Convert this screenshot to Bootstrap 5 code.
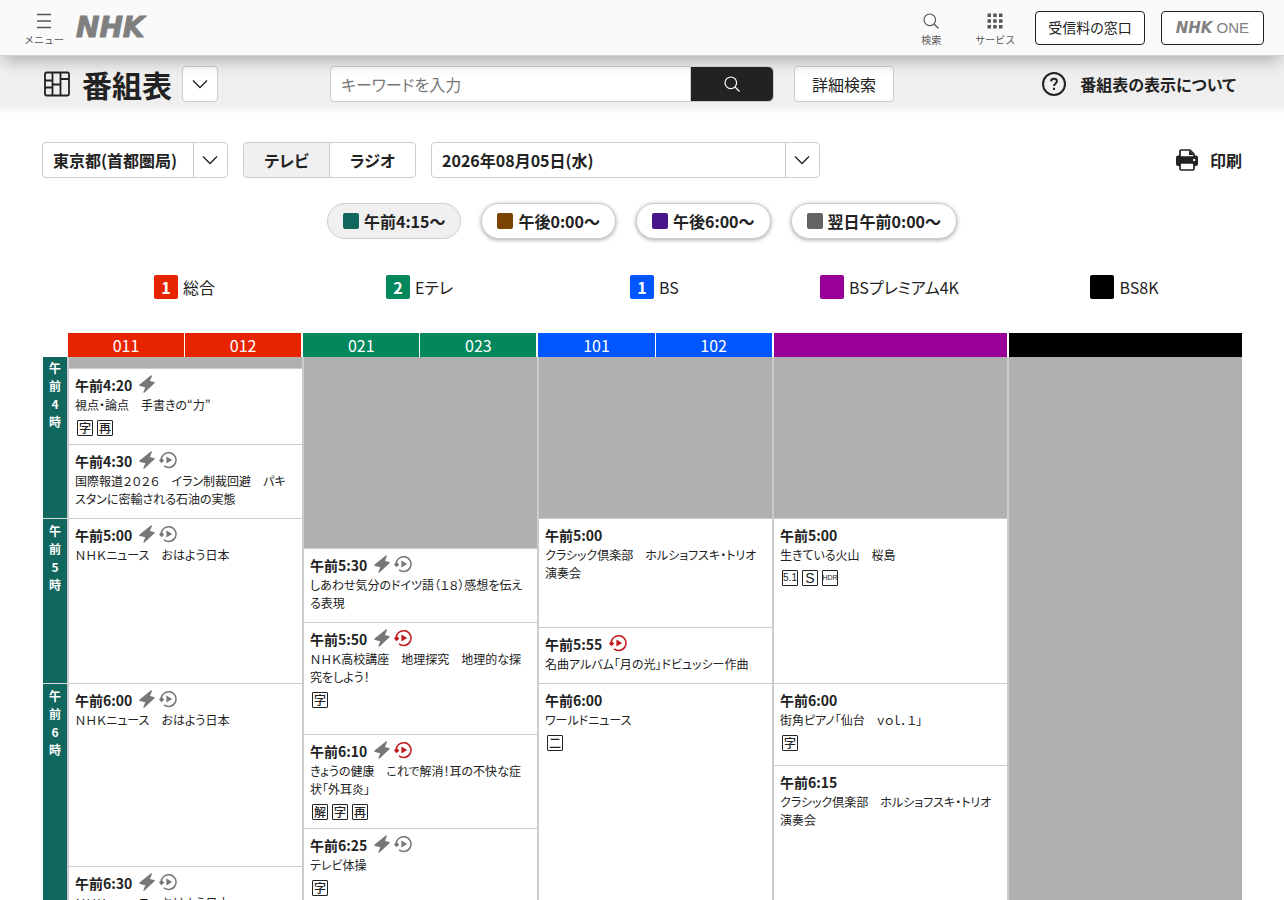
<!DOCTYPE html>
<html lang="ja">
<head>
<meta charset="utf-8">
<meta name="viewport" content="width=device-width, initial-scale=1">
<title>番組表 - NHK</title>
<link rel="stylesheet" href="https://cdn.jsdelivr.net/npm/bootstrap@5.3.0/dist/css/bootstrap.min.css">
<style>
  body { font-family: "Noto Sans CJK JP", sans-serif; font-feature-settings: "palt"; font-size: 16px; color: #222; height: 100vh; }
  input, select, button { font-feature-settings: "palt"; }
  a { color: inherit; text-decoration: none; }
  .site-head { height: 56px; background: #fafafa; border-bottom: 1px solid #d2d2d2; box-shadow: 0 10px 14px -4px rgba(0,0,0,.24); padding: 0 20px; z-index: 2; color: #555; }
  .nav-item-sm { border: 0; background: none; color: inherit; padding: 4px 0 0; font-size: 10px; line-height: 14px; width: 48px; gap: 4px; font-feature-settings: normal; }
  .logo { font-family: "DejaVu Sans", sans-serif; font-weight: 700; font-style: oblique; color: #808080; font-size: 28px; line-height: 32px; -webkit-text-stroke: 1px #808080; }
  .logo-s { font-size: 15px; line-height: 20px; -webkit-text-stroke: 0; }
  .one { font-family: "Liberation Sans", sans-serif; font-size: 15px; line-height: 20px; color: #808080; }
  .head-btn { height: 34px; background: #fff; border: 1px solid #222; border-radius: 4px; color: #222; font-size: 14px; padding: 0 12px; }
  .head-one { padding: 0 14px; }
  .title-bar { height: 58px; background: linear-gradient(#efefef 50px, #fff); padding: 0 42px 2px; }
  .title-left { width: 288px; gap: 10px; }
  h1 { font-size: 30px; line-height: 36px; font-weight: 700; }
  .box { height: 36px; border: 1px solid #ccc; border-radius: 4px; background-color: #fff; color: #222; font-size: 16px; line-height: 24px; padding: 0 10px; }
  .box::placeholder { color: #777; }
  .sq { width: 36px; padding: 0; }
  .search { width: 444px; }
  .search-btn { width: 84px; background: #222; border: 1px solid #ccc; color: #fff; padding: 0; }
  .search-btn:hover { background: #444; color: #fff; }
  .detail { width: 100px; margin-left: 20px; }
  .fw-b { font-weight: 700; }
  .help { gap: 14px; margin-right: 6px; }
  .filters { padding: 0 42px; margin-top: 28px; gap: 15px; }
  .pick { font-weight: 700; background-image: url("data:image/svg+xml,%3Csvg xmlns='http://www.w3.org/2000/svg' viewBox='0 0 16 16' fill='none' stroke='%23222' stroke-width='1.3'%3E%3Cpath d='M1 4.5l7 7 7-7'/%3E%3C/svg%3E"), linear-gradient(#ccc, #ccc); background-size: 16px 16px, 1px 36px; background-repeat: no-repeat; background-position: right 9px center, right 33px center; padding-right: 36px; }
  .pick-area { width: 186px; }
  .pick-date { width: 389px; }
  .media { width: 173px; }
  .media .btn { border: 1px solid #ccc; height: 36px; line-height: 34px; padding: 0; font-weight: 700; color: #222; border-radius: 4px; }
  .media .btn-check:checked + .btn { background: #f0f0f0; border-color: #ccc; color: #222; }
  .pills { margin-top: 25px; gap: 20px; }
  .pill { height: 36px; border: 1px solid #ccc; border-radius: 18px; background: #fff; color: #222; font-weight: 700; font-size: 16px; padding: 0 15px; gap: 5px; box-shadow: 0 1px 4px rgba(0,0,0,.35); }
  .pill.on { background: #f0f0f0; box-shadow: none; }
  .chip { width: 16px; height: 16px; border-radius: 2px; }
  .legend-row { margin: 36px 42px 0; padding-left: 25px; }
  .legend-row > a { flex: 1 1 0; gap: 5px; line-height: 24px; }
  .swatch { width: 24px; height: 24px; border-radius: 2px; color: #fff; font-weight: 700; line-height: 24px; text-align: center; }
  .ch-row { margin: 34px 42px 0; padding-left: 25px; }
  .ch { flex: 1 1 0; margin: 0 1px; height: 24px; color: #fff; line-height: 24px; text-align: center; }
  .ch span { flex: 1 1 0; }
  .ch span + span { border-left: 1px solid #fff; }
  .c-g { background: #e82400; } .c-e { background: #03875c; } .c-bs { background: #0057ff; } .c-4k { background: #990099; } .c-8k { background: #000; }
  .t-am { background: #11675e; } .t-pm { background: #7a4300; } .t-ev { background: #481489; } .t-nx { background: #646464; }
  .guide { margin: 0 42px; min-height: 0; }
  .hours { width: 25px; padding-left: 1px; }
  .hour { color: #fff; font-size: 12px; font-weight: 700; line-height: 18px; text-align: center; padding: 2px 6px; flex: none; }
  .hour + .hour { border-top: 1px solid #ddd; padding-top: 3px; }
  .lane { flex: 1 1 0; min-width: 0; border-left: 2px solid #ccc; }
  .prog { flex: none; overflow: hidden; border-top: 1px solid #ccc; padding: 6px 14px 0 6px; font-size: 12px; line-height: 18px; }
  .off { flex: none; background: #b0b0b0; }
  .rest { flex: 1 0 auto; }
  .when { font-size: 14px; font-weight: 700; height: 20px; margin-bottom: 1px; gap: 4px; line-height: 20px; }
  .when time { margin-right: 3px; }
  .ico { flex: none; display: block; }
  .marks { gap: 4px; padding: 6px 0 0 2px; }
  .mk { width: 16px; height: 16px; border: 1px solid #222; border-radius: 1px; font-size: 12px; font-weight: 500; line-height: 14px; display: flex; justify-content: center; }
  .mk-l { font-family: "Liberation Sans", sans-serif; font-size: 14px; }
  .mk-n { font-family: "Liberation Sans Narrow", "Liberation Sans", sans-serif; font-size: 10px; }
  .mk-t { font-size: 7px; }
  .gray { color: #777; } .red { color: #c1191b; }
</style>
<script src="https://cdn.jsdelivr.net/npm/bootstrap@5.3.0/dist/js/bootstrap.bundle.min.js"></script>
</head>
<body class="d-flex flex-column overflow-hidden">
<svg width="0" height="0" class="position-absolute" aria-hidden="true">
  <symbol id="bolt" viewBox="0 0 16 18"><path fill="currentColor" d="M11.800.4 .6 9.500Q-.3 10.600 1 11l5.300 1.300-1.900 4.600q-.1 1.400 1.100.5L15.500 8.300Q16.400 7.200 15 6.900L10.900 6l2-4.800Q13.100-.4 11.800.4z"/></symbol>
  <symbol id="replay" viewBox="0 0 18 18"><path d="M2.200 9.500A7.400 7.400 0 1 1 5 14.900" fill="none" stroke="currentColor" stroke-width="1.500"/><path fill="currentColor" d="M0 9.600 2.300 7l3 2.600-2.700 2.600zM7.400 5.500v7L13.200 9z"/></symbol>
  <symbol id="down" viewBox="0 0 16 16"><path d="M1 4.500l7 7 7-7" fill="none" stroke="currentColor" stroke-width="1.300"/></symbol>
  <symbol id="lens" viewBox="0 0 16 16"><circle cx="6.800" cy="6.800" r="5.800" fill="none" stroke="currentColor" stroke-width="1.200"/><path d="M11 11l4.500 4.500" stroke="currentColor" stroke-width="1.200"/></symbol>
</svg>

<header class="site-head d-flex align-items-center position-relative flex-shrink-0">
  <button type="button" class="nav-item-sm d-flex flex-column align-items-center">
    <svg class="ico" width="16" height="16" viewBox="0 0 16 16"><path d="M1 1.500h14M1 8h14M1 14.500h14" stroke="currentColor" stroke-width="1.300"/></svg>メニュー
  </button>
  <a href="#" class="logo ms-2">NHK</a>
  <div class="d-flex align-items-center ms-auto">
    <button type="button" class="nav-item-sm d-flex flex-column align-items-center">
      <svg class="ico" width="16" height="16"><use href="#lens"/></svg>検索
    </button>
    <button type="button" class="nav-item-sm d-flex flex-column align-items-center ms-3">
      <svg class="ico" width="16" height="16" viewBox="0 0 16 16" fill="currentColor"><path d="M.5.5H4V4H.5zM6.200.5h3.500V4H6.200zM12 .5h3.500V4H12zM.5 6.200H4v3.500H.5zM6.200 6.200h3.500v3.500H6.200zM12 6.200h3.500v3.500H12zM.5 12H4v3.500H.5zM6.200 12h3.500v3.500H6.200zM12 12h3.500v3.500H12z"/></svg>サービス
    </button>
    <a href="#" class="head-btn d-flex align-items-center ms-3">受信料の窓口</a>
    <a href="#" class="head-btn head-one d-flex align-items-center justify-content-center ms-3 gap-1"><span class="logo logo-s">NHK</span><span class="one">ONE</span></a>
  </div>
</header>

<div class="title-bar d-flex align-items-center flex-shrink-0">
  <div class="title-left d-flex align-items-center">
    <svg class="ico" width="30" height="26" viewBox="0 0 30 26" fill="none" stroke="#222" stroke-width="1.800"><rect x="3" y="1.500" width="24" height="23" rx="1.500"/><path d="M10.500 1.500v23M18.500 1.500v23M3 9.500h7.500M3 16.500h7.500M10.500 13.500h8M18.500 8H27"/></svg>
    <h1 class="mb-0">番組表</h1>
    <button type="button" class="box sq d-flex align-items-center justify-content-center" aria-label="メニューを開く"><svg width="16" height="16"><use href="#down"/></svg></button>
  </div>
  <form class="search input-group flex-nowrap">
    <input type="search" class="form-control box" placeholder="キーワードを入力" aria-label="キーワード">
    <button type="button" class="btn search-btn" aria-label="検索"><svg class="ico mx-auto" width="16" height="16"><use href="#lens"/></svg></button>
  </form>
  <a href="#" class="box detail d-flex align-items-center justify-content-center">詳細検索</a>
  <a href="#" class="help fw-b d-flex align-items-center ms-auto">
    <svg class="ico" width="24" height="24" viewBox="0 0 24 24" fill="none" stroke="#222" stroke-width="2"><circle cx="12" cy="12" r="11"/><path d="M9 9.300C9.200 7.600 10.400 6.800 12 6.800s2.900.9 2.900 2.400c0 2.200-2.900 2.300-2.900 4.900M12 15.700V18"/></svg>番組表の表示について
  </a>
</div>

<div class="filters d-flex align-items-center flex-shrink-0">
  <select class="form-select box pick pick-area" aria-label="地域"><option>東京都(首都圏局)</option></select>
  <div class="btn-group media" role="group" aria-label="メディア">
    <input type="radio" class="btn-check" name="media" id="tv" checked><label class="btn w-50" for="tv">テレビ</label>
    <input type="radio" class="btn-check" name="media" id="radio"><label class="btn w-50" for="radio">ラジオ</label>
  </div>
  <select class="form-select box pick pick-date" aria-label="日付"><option>2026年08月05日(水)</option></select>
  <a href="#" class="fw-b d-flex align-items-center ms-auto">
    <svg class="ico me-2" width="26" height="22" viewBox="0 0 26 22" fill="none"><path d="M0 8.500q0-2 2-2h18q2 0 2 2V15q0 2-2 2H2q-2 0-2-2z" fill="#222"/><path d="M4 8V2.300Q4 1 5.300 1h8.700L18 5v3z" fill="#fff" stroke="#222" stroke-width="1.700"/><path d="M13 1v5h5z" fill="#222"/><path d="M1 8.500h20v5H1z" fill="#222"/><rect x="4" y="14" width="14" height="7" rx="1.300" fill="#fff" stroke="#222" stroke-width="1.700"/><circle cx="18.200" cy="11" r="1.200" fill="#fff"/></svg>印刷
  </a>
</div>

<nav class="pills d-flex justify-content-center flex-shrink-0" aria-label="時間帯">
  <button type="button" class="pill on d-flex align-items-center"><i class="chip t-am"></i>午前4:15～</button>
  <button type="button" class="pill d-flex align-items-center"><i class="chip t-pm"></i>午後0:00～</button>
  <button type="button" class="pill d-flex align-items-center"><i class="chip t-ev"></i>午後6:00～</button>
  <button type="button" class="pill d-flex align-items-center"><i class="chip t-nx"></i>翌日午前0:00～</button>
</nav>

<div class="legend-row d-flex flex-shrink-0">
  <a href="#" class="d-flex justify-content-center"><span class="swatch c-g">1</span>総合</a>
  <a href="#" class="d-flex justify-content-center"><span class="swatch c-e">2</span>Eテレ</a>
  <a href="#" class="d-flex justify-content-center"><span class="swatch c-bs">1</span>BS</a>
  <a href="#" class="d-flex justify-content-center"><span class="swatch c-4k"></span>BSプレミアム4K</a>
  <a href="#" class="d-flex justify-content-center"><span class="swatch c-8k"></span>BS8K</a>
</div>

<div class="ch-row d-flex flex-shrink-0">
  <div class="ch c-g d-flex"><span>011</span><span>012</span></div>
  <div class="ch c-e d-flex"><span>021</span><span>023</span></div>
  <div class="ch c-bs d-flex"><span>101</span><span>102</span></div>
  <div class="ch c-4k"></div>
  <div class="ch c-8k me-0"></div>
</div>

<main class="guide d-flex flex-grow-1 overflow-hidden">
  <div class="hours d-flex flex-column">
    <div class="hour t-am" style="height:161px">午前4時</div>
    <div class="hour t-am" style="height:165px">午前5時</div>
    <div class="hour t-am rest">午前6時</div>
  </div>
  <section class="lane d-flex flex-column" aria-label="総合">
    <div class="off" style="height:11px"></div>
    <article class="prog" style="height:76px">
      <div class="when d-flex"><time>午前4:20</time><svg class="ico gray" width="16" height="18"><use href="#bolt"/></svg></div>
      <a href="#">視点・論点　手書きの“力”</a>
      <div class="marks d-flex"><span class="mk">字</span><span class="mk">再</span></div>
    </article>
    <article class="prog" style="height:74px">
      <div class="when d-flex"><time>午前4:30</time><svg class="ico gray" width="16" height="18"><use href="#bolt"/></svg><svg class="ico gray" width="18" height="18"><use href="#replay"/></svg></div>
      <a href="#">国際報道２０２６　イラン制裁回避　パキスタンに密輸される石油の実態</a>
    </article>
    <article class="prog" style="height:165px">
      <div class="when d-flex"><time>午前5:00</time><svg class="ico gray" width="16" height="18"><use href="#bolt"/></svg><svg class="ico gray" width="18" height="18"><use href="#replay"/></svg></div>
      <a href="#">ＮＨＫニュース　おはよう日本</a>
    </article>
    <article class="prog" style="height:183px">
      <div class="when d-flex"><time>午前6:00</time><svg class="ico gray" width="16" height="18"><use href="#bolt"/></svg><svg class="ico gray" width="18" height="18"><use href="#replay"/></svg></div>
      <a href="#">ＮＨＫニュース　おはよう日本</a>
    </article>
    <article class="prog rest">
      <div class="when d-flex"><time>午前6:30</time><svg class="ico gray" width="16" height="18"><use href="#bolt"/></svg><svg class="ico gray" width="18" height="18"><use href="#replay"/></svg></div>
      <a href="#">ＮＨＫニュース　おはよう日本</a>
    </article>
  </section>
  <section class="lane d-flex flex-column" aria-label="Eテレ">
    <div class="off" style="height:191px"></div>
    <article class="prog" style="height:74px">
      <div class="when d-flex"><time>午前5:30</time><svg class="ico gray" width="16" height="18"><use href="#bolt"/></svg><svg class="ico gray" width="18" height="18"><use href="#replay"/></svg></div>
      <a href="#">しあわせ気分のドイツ語（１８）感想を伝える表現</a>
    </article>
    <article class="prog" style="height:112px">
      <div class="when d-flex"><time>午前5:50</time><svg class="ico gray" width="16" height="18"><use href="#bolt"/></svg><svg class="ico red" width="18" height="18"><use href="#replay"/></svg></div>
      <a href="#">ＮＨＫ高校講座　地理探究　地理的な探究をしよう！</a>
      <div class="marks d-flex"><span class="mk">字</span></div>
    </article>
    <article class="prog" style="height:94px">
      <div class="when d-flex"><time>午前6:10</time><svg class="ico gray" width="16" height="18"><use href="#bolt"/></svg><svg class="ico red" width="18" height="18"><use href="#replay"/></svg></div>
      <a href="#">きょうの健康　これで解消！耳の不快な症状「外耳炎」</a>
      <div class="marks d-flex"><span class="mk">解</span><span class="mk">字</span><span class="mk">再</span></div>
    </article>
    <article class="prog rest">
      <div class="when d-flex"><time>午前6:25</time><svg class="ico gray" width="16" height="18"><use href="#bolt"/></svg><svg class="ico gray" width="18" height="18"><use href="#replay"/></svg></div>
      <a href="#">テレビ体操</a>
      <div class="marks d-flex"><span class="mk">字</span></div>
    </article>
  </section>
  <section class="lane d-flex flex-column" aria-label="BS">
    <div class="off" style="height:161px"></div>
    <article class="prog" style="height:109px">
      <div class="when d-flex"><time>午前5:00</time></div>
      <a href="#">クラシック倶楽部　ホルショフスキ・トリオ演奏会</a>
    </article>
    <article class="prog" style="height:56px">
      <div class="when d-flex"><time>午前5:55</time><svg class="ico red" width="18" height="18"><use href="#replay"/></svg></div>
      <a href="#">名曲アルバム「月の光」ドビュッシー作曲</a>
    </article>
    <article class="prog rest">
      <div class="when d-flex"><time>午前6:00</time></div>
      <a href="#">ワールドニュース</a>
      <div class="marks d-flex"><span class="mk">二</span></div>
    </article>
  </section>
  <section class="lane d-flex flex-column" aria-label="BSプレミアム4K">
    <div class="off" style="height:161px"></div>
    <article class="prog" style="height:165px">
      <div class="when d-flex"><time>午前5:00</time></div>
      <a href="#">生きている火山　桜島</a>
      <div class="marks d-flex"><span class="mk mk-n">5.1</span><span class="mk mk-l">S</span><span class="mk mk-n mk-t">HDR</span></div>
    </article>
    <article class="prog" style="height:82px">
      <div class="when d-flex"><time>午前6:00</time></div>
      <a href="#">街角ピアノ「仙台　ｖｏｌ．１」</a>
      <div class="marks d-flex"><span class="mk">字</span></div>
    </article>
    <article class="prog rest">
      <div class="when d-flex"><time>午前6:15</time></div>
      <a href="#">クラシック倶楽部　ホルショフスキ・トリオ演奏会</a>
    </article>
  </section>
  <section class="lane d-flex flex-column" aria-label="BS8K">
    <div class="off rest"></div>
  </section>
</main>
</body>
</html>
